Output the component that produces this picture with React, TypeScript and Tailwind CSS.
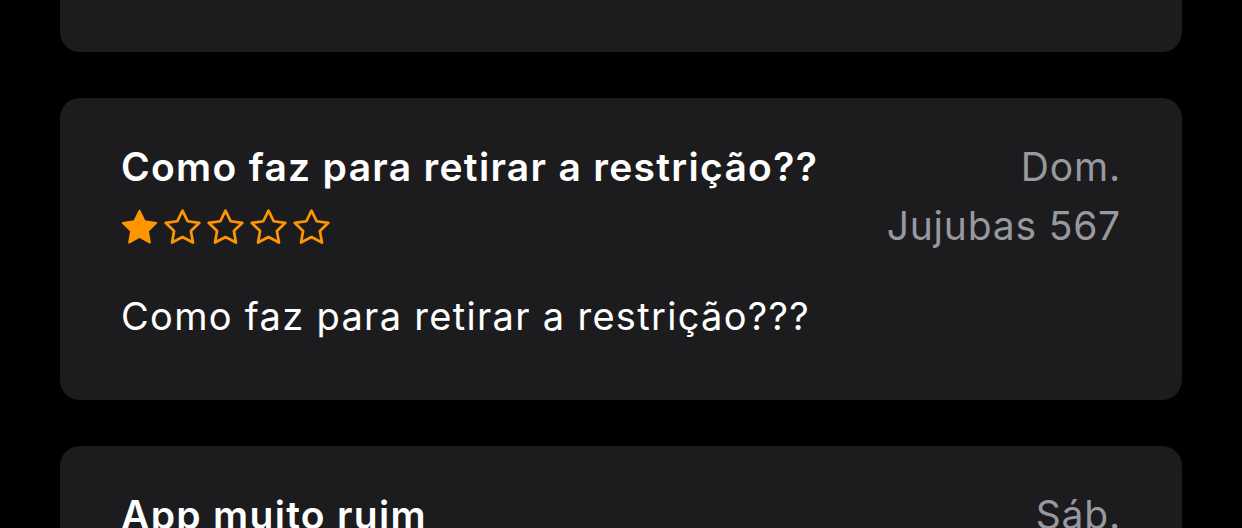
import React from "react";

type Review = {
  id: number;
  title: string;
  day: string;
  author: string;
  rating: number;
  body: string;
};

const reviews: Review[] = [
  {
    id: 1,
    title: "Como faz para retirar a restrição??",
    day: "Dom.",
    author: "Jujubas 567",
    rating: 1,
    body: "Como faz para retirar a restrição???",
  },
  {
    id: 2,
    title: "App muito ruim",
    day: "Sáb.",
    author: "",
    rating: 1,
    body: "",
  },
];

function Star({ filled }: { filled: boolean }) {
  return (
    <svg width="37" height="35" viewBox="1.2 0.9 21.6 20.6" className="shrink-0">
      <path
        d="M12 1.9l3.05 6.2 6.85.95-4.95 4.8 1.2 6.8L12 17.4l-6.15 3.25 1.2-6.8L2.1 9.05l6.85-.95z"
        fill={filled ? "#ff9500" : "none"}
        stroke="#ff9500"
        strokeWidth={filled ? 1.1 : 1.6}
        strokeLinejoin="round"
      />
    </svg>
  );
}

function ReviewCard({ r }: { r: Review }) {
  return (
    <div className="shrink-0 rounded-[20px] bg-[#1c1c1e] pl-[61px] pr-[61px] pt-[46px] pb-[64px]">
      <div className="flex items-start justify-between leading-[46px] text-[39px]">
        <span className="font-semibold text-white tracking-[1.3px]">{r.title}</span>
        <span className="text-[#98989f] tracking-[0.8px]">{r.day}</span>
      </div>
      <div className="mt-[13px] flex items-center justify-between leading-[46px] text-[39px]">
        <div className="flex gap-[6px]">
          {[1, 2, 3, 4, 5].map((n) => (
            <Star key={n} filled={n <= r.rating} />
          ))}
        </div>
        <span className="text-[#98989f] tracking-[0.8px]">{r.author}</span>
      </div>
      <p className="mt-[47px] text-[38px] leading-[40px] tracking-[1.3px] text-white">{r.body}</p>
    </div>
  );
}

export default function App() {
  return (
    <div
      className="h-[528px] overflow-hidden bg-black px-[60px]"
      style={{ fontFamily: "Inter, 'Noto Sans', sans-serif" }}
    >
      <div className="flex flex-col gap-[46px]">
        <div className="h-[52px] rounded-b-[20px] bg-[#1c1c1e]" />
        {reviews.map((r) => (
          <ReviewCard key={r.id} r={r} />
        ))}
      </div>
    </div>
  );
}
